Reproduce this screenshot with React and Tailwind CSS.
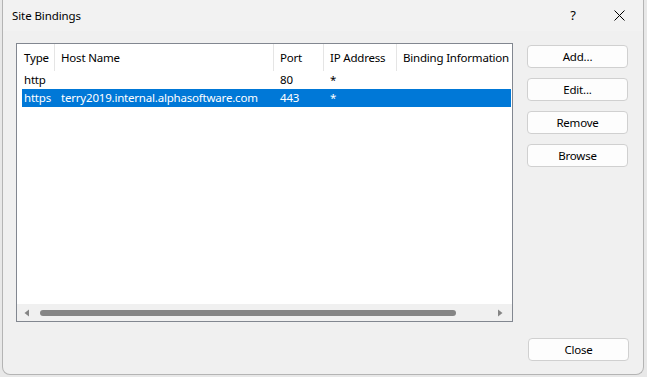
import React from "react";

const font = { fontFamily: '"Noto Sans", "Open Sans", sans-serif' };

function Btn({ children, className = "" }) {
  return (
    <div className={"w-[101px] h-[23px] flex items-center justify-center rounded-[4px] border border-[#d0d0d0] bg-[#fdfdfd] text-[11.5px] tracking-[-0.2px] text-black " + className}>
      {children}
    </div>
  );
}

export default function App() {
  const cols = [
    { w: "w-[38px]", label: "Type" },
    { w: "w-[219px]", label: "Host Name" },
    { w: "w-[50px]", label: "Port" },
    { w: "w-[73px]", label: "IP Address" },
    { w: "w-[115px]", label: "Binding Information" },
  ];
  const rows = [
    { cells: ["http", "", "80", "*", ""], sel: false },
    { cells: ["https", "terry2019.internal.alphasoftware.com", "443", "*", ""], sel: true },
  ];
  const widths = ["w-[33px]", "w-[219px]", "w-[50px]", "w-[73px]", "w-[112px]"];
  return (
    <div className="w-[647px] h-[377px] bg-[#e8e8e8] pl-[2px] overflow-hidden" style={font}>
      <div className="w-[642px] h-[375px] bg-[#f0f0f0] border-l border-r border-b border-[#b4b4b4] rounded-br-[8px] rounded-bl-[8px] flex flex-col">
        <div className="h-[31px] flex items-center bg-[#f2f2f2] shrink-0">
          <div className="pl-[9px] text-[11.5px] tracking-[-0.1px] text-black flex-1">Site Bindings</div>
          <div className="w-[46px] text-center text-[13px] text-black">?</div>
          <div className="w-[46px] flex items-center justify-center mr-[1px]">
            <svg width="11" height="11" viewBox="0 0 11 11"><path d="M0.5 0.5L10.5 10.5M10.5 0.5L0.5 10.5" stroke="#000" strokeWidth="1" /></svg>
          </div>
        </div>
        <div className="flex pt-[12px] pl-[13px]">
          <div className="w-[497px] h-[279px] border border-[#828790] bg-white flex flex-col">
            <div className="h-[27px] flex items-stretch shrink-0">
              {cols.map((c, i) => (
                <div key={i} className={c.w + " shrink-0 flex items-center text-[11.5px] tracking-[-0.2px] text-black whitespace-nowrap overflow-hidden " + (i === 0 ? "pl-[7px] " : "pl-[6px] ") + (i < cols.length - 1 ? "border-r border-[#e5e5e5]" : "")}>
                  {c.label}
                </div>
              ))}
            </div>
            {rows.map((r, ri) => (
              <div key={ri} className={"h-[18px] flex items-center shrink-0 ml-[5px] mr-[1px] " + (r.sel ? "bg-[#0078d7] text-white" : "text-black")}>
                {r.cells.map((c, ci) => (
                  <div key={ci} className={widths[ci] + " shrink-0 text-[11.5px] tracking-[-0.2px] whitespace-nowrap overflow-hidden " + (ci === 0 ? "pl-[2px]" : "pl-[6px]")}>
                    {c}
                  </div>
                ))}
              </div>
            ))}
            <div className="flex-1" />
            <div className="h-[17px] bg-[#f0f0f0] flex items-center shrink-0 px-[4px]">
              <svg width="8" height="8" viewBox="0 0 8 8" className="ml-[2px]"><path d="M6 0.5L1.5 4L6 7.5Z" fill="#858585" /></svg>
              <div className="ml-[9px] w-[416px] h-[6px] rounded-full bg-[#858585]" />
              <div className="flex-1" />
              <svg width="8" height="8" viewBox="0 0 8 8" className="mr-[4px]"><path d="M2 0.5L6.5 4L2 7.5Z" fill="#858585" /></svg>
            </div>
          </div>
          <div className="ml-[14px] pt-[2px] flex flex-col gap-[10px]">
            <Btn>Add...</Btn>
            <Btn>Edit...</Btn>
            <Btn>Remove</Btn>
            <Btn>Browse</Btn>
          </div>
        </div>
        <div className="flex justify-end pr-[14px] mt-[16px]">
          <Btn>Close</Btn>
        </div>
      </div>
    </div>
  );
}
